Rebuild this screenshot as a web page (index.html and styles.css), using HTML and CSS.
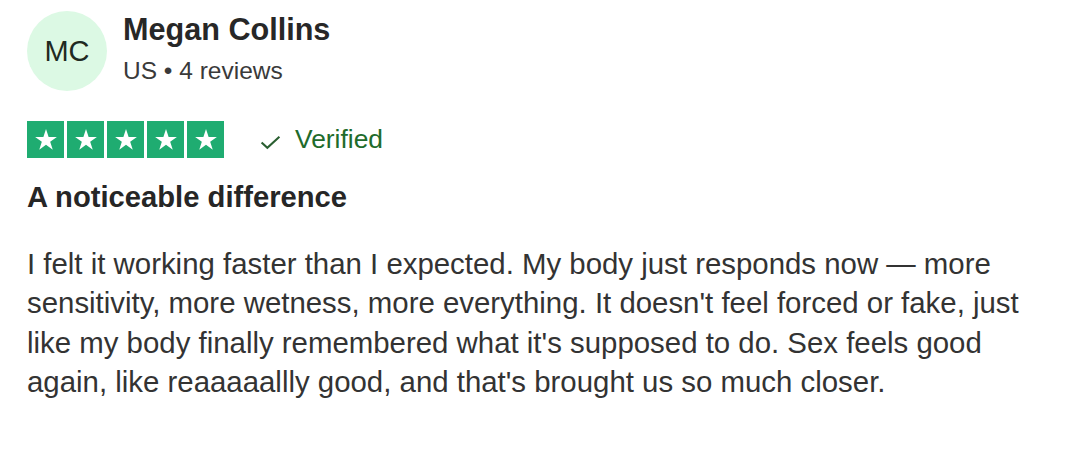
FILE: index.html
```html
<!DOCTYPE html>
<html lang="en">
<head>
<meta charset="utf-8">
<title>Review</title>
<link rel="stylesheet" href="styles.css">
</head>
<body>
<article class="review">
  <header class="reviewer">
    <div class="avatar">MC</div>
    <div class="reviewer-info">
      <div class="name">Megan Collins</div>
      <div class="meta">US • 4 reviews</div>
    </div>
  </header>
  <div class="rating-row">
    <div class="stars">
      <span class="star"><svg viewBox="0 0 24 24"><path d="M12 3.2l2.1 6.3h6.6l-5.35 3.9 2.05 6.35L12 15.8l-5.4 3.95 2.05-6.35L3.3 9.5h6.6z"/></svg></span>
      <span class="star"><svg viewBox="0 0 24 24"><path d="M12 3.2l2.1 6.3h6.6l-5.35 3.9 2.05 6.35L12 15.8l-5.4 3.95 2.05-6.35L3.3 9.5h6.6z"/></svg></span>
      <span class="star"><svg viewBox="0 0 24 24"><path d="M12 3.2l2.1 6.3h6.6l-5.35 3.9 2.05 6.35L12 15.8l-5.4 3.95 2.05-6.35L3.3 9.5h6.6z"/></svg></span>
      <span class="star"><svg viewBox="0 0 24 24"><path d="M12 3.2l2.1 6.3h6.6l-5.35 3.9 2.05 6.35L12 15.8l-5.4 3.95 2.05-6.35L3.3 9.5h6.6z"/></svg></span>
      <span class="star"><svg viewBox="0 0 24 24"><path d="M12 3.2l2.1 6.3h6.6l-5.35 3.9 2.05 6.35L12 15.8l-5.4 3.95 2.05-6.35L3.3 9.5h6.6z"/></svg></span>
    </div>
    <div class="verified">
      <svg class="check" viewBox="0 0 20 14"><path d="M1.5 7l5.5 5L18.5 1.5"/></svg>
      <span>Verified</span>
    </div>
  </div>
  <h2 class="title">A noticeable difference</h2>
  <p class="text">I felt it working faster than I expected. My body just responds now — more sensitivity, more wetness, more everything. It doesn't feel forced or fake, just like my body finally remembered what it's supposed to do. Sex feels good again, like reaaaaallly good, and that's brought us so much closer.</p>
</article>
</body>
</html>
```

FILE: styles.css
```css
html, body {
  margin: 0;
  padding: 0;
  background: #ffffff;
}

body {
  font-family: "Liberation Sans", Arial, Helvetica, sans-serif;
  color: #333333;
}

.review {
  padding: 11px 27px 0 27px;
  width: 1020px;
}

.reviewer {
  display: flex;
  align-items: flex-start;
  gap: 16px;
}

.avatar {
  width: 80px;
  height: 80px;
  border-radius: 50%;
  background: #dcf9e4;
  color: #1f2a22;
  font-size: 29px;
  display: flex;
  align-items: center;
  justify-content: center;
  flex-shrink: 0;
}

.reviewer-info {
  padding-top: 1px;
}

.name {
  font-size: 30.6px;
  font-weight: bold;
  color: #272727;
  line-height: 34px;
}

.meta {
  font-size: 24.5px;
  color: #3a3a3a;
  line-height: 28px;
  margin-top: 11px;
}

.rating-row {
  display: flex;
  align-items: center;
  margin-top: 30px;
}

.stars {
  display: flex;
  gap: 3px;
}

.star {
  width: 37px;
  height: 37px;
  background: #1fac71;
  display: flex;
  align-items: center;
  justify-content: center;
}

.star svg {
  width: 30px;
  height: 30px;
  fill: #ffffff;
}

.verified {
  display: flex;
  align-items: center;
  margin-left: 36px;
  color: #216b2b;
  font-size: 26.4px;
  gap: 14px;
}

.check {
  width: 21px;
  height: 15px;
  fill: none;
  stroke: #2a5f31;
  stroke-width: 2;
  margin-top: 6px;
}

.title {
  font-size: 29.2px;
  font-weight: bold;
  color: #262626;
  margin: 22px 0 0 0;
  line-height: 34px;
}

.text {
  font-size: 29.4px;
  line-height: 39.3px;
  color: #333333;
  margin: 30px 0 0 0;
}
```
